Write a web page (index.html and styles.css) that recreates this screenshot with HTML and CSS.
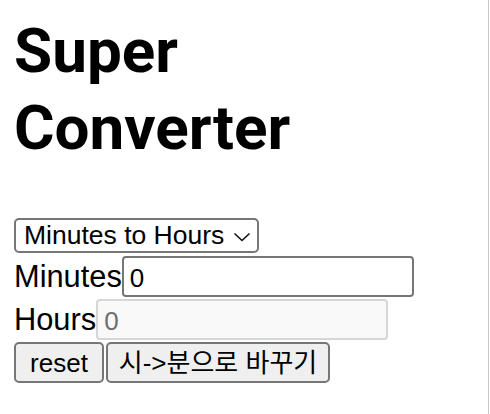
FILE: index.html
```html
<!DOCTYPE html>
<html lang="ko">
<head>
<meta charset="utf-8">
<title>Super Converter</title>
<link rel="stylesheet" href="styles.css">
</head>
<body>
<div class="page">
  <h1 class="title">Super Converter</h1>
  <div class="row row-select">
    <div class="select">
      <span class="select-text">Minutes to Hours</span>
      <svg class="chevron" width="18" height="10" viewBox="0 0 18 10"><path d="M1.5 1.5 L9 8.5 L16.5 1.5" fill="none" stroke="#111" stroke-width="1.6"/></svg>
    </div>
  </div>
  <div class="row row-field">
    <label class="label" for="minutes">Minutes</label><input id="minutes" class="field" type="number" value="0">
  </div>
  <div class="row row-field">
    <label class="label" for="hours">Hours</label><input id="hours" class="field field-disabled" type="number" value="0" disabled>
  </div>
  <div class="row row-buttons">
    <button class="btn btn-reset">reset</button><button class="btn btn-flip">시-&gt;분으로 바꾸기</button>
  </div>
</div>
</body>
</html>
```
FILE: styles.css
```css
html {
  box-sizing: border-box;
  width: 489px;
  min-height: 100%;
  border-right: 1px solid #c8c8c8;
  background: #fff;
}
body {
  margin: 0;
}
.page {
  padding: 12px 14px 0 14px;
  font-family: "Liberation Sans", Arial, sans-serif;
  color: #000;
}
.title {
  margin: 0;
  font-family: Roboto, "Noto Sans", sans-serif;
  font-weight: 700;
  font-size: 62px;
  line-height: 77px;
  width: 320px;
}
.row {
  display: flex;
  align-items: baseline;
}
.row-select {
  margin-top: 52px;
}
.row-field {
  margin-top: 3px;
}
.row-field + .row-field {
  margin-top: 2px;
}
.row-buttons {
  margin-top: 2px;
}
.select {
  box-sizing: border-box;
  width: 245px;
  height: 35px;
  border: 2px solid #767676;
  border-radius: 5px;
  display: flex;
  align-items: center;
  padding-left: 8px;
  gap: 9px;
  font-size: 26.5px;
}
.select-text {
  line-height: 1;
}
.chevron {
  display: block;
  margin-top: 3px;
}
.label {
  font-size: 30.8px;
  line-height: 41px;
}
.field {
  box-sizing: border-box;
  width: 292px;
  height: 41px;
  margin: 0;
  border: 2px solid #767676;
  border-radius: 4px;
  padding: 4px 6px 0 6px;
  font-family: "Liberation Sans", Arial, sans-serif;
  font-size: 26px;
  color: #000;
  background: #fff;
  -moz-appearance: textfield;
}
.field::-webkit-inner-spin-button,
.field::-webkit-outer-spin-button {
  -webkit-appearance: none;
  margin: 0;
}
.field-disabled {
  border-color: #d6d6d6;
  background: #f9f9f9;
  color: #6d6d6d;
}
.btn {
  box-sizing: border-box;
  height: 41px;
  margin: 0 2px 0 0;
  border: 2px solid #767676;
  border-radius: 5px;
  background: #efefef;
  color: #000;
  font-family: "Liberation Sans", "Noto Sans CJK KR", sans-serif;
  font-size: 26px;
  line-height: 1;
  padding: 0;
  white-space: nowrap;
  text-align: center;
}
.btn-reset {
  width: 90px;
}
.btn-flip {
  width: 224px;
}
```
